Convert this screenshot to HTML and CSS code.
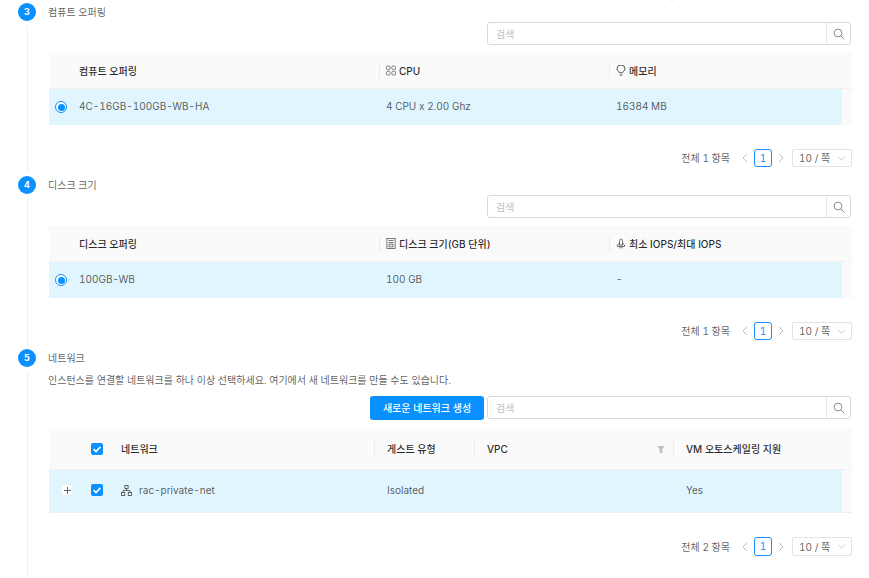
FILE: index.html
```html
<!DOCTYPE html>
<html lang="ko">
<head>
<meta charset="utf-8">
<title>인스턴스</title>
<link rel="stylesheet" href="styles.css">
</head>
<body>
<svg class="defs" width="0" height="0" aria-hidden="true">
  <symbol id="search" viewBox="0 0 12 12"><circle cx="5" cy="5" r="3.9" fill="none" stroke="currentColor"/><path d="M8 8l3.4 3.4" stroke="currentColor" fill="none"/></symbol>
  <symbol id="left" viewBox="0 0 8 10"><path d="M6 1L2 5l4 4" fill="none" stroke="currentColor"/></symbol>
  <symbol id="right" viewBox="0 0 8 10"><path d="M2 1l4 4-4 4" fill="none" stroke="currentColor"/></symbol>
  <symbol id="down" viewBox="0 0 10 6"><path d="M.8.8L5 5 9.2.8" fill="none" stroke="currentColor"/></symbol>
  <symbol id="check" viewBox="0 0 12 12"><path d="M2.6 6.2l2.4 2.3 4.4-4.6" fill="none" stroke="#fff" stroke-width="1.7"/></symbol>
</svg>
<main class="page">
  <span class="top-mark"></span>

  <section class="step">
    <div class="rail"><span class="dot">3</span><span class="line"></span></div>
    <div class="body">
      <div class="title">컴퓨트 오퍼링</div>
      <div class="toolbar">
        <div class="search"><span class="ph">검색</span><span class="search-btn"><svg class="i12"><use href="#search"/></svg></span></div>
      </div>
      <div class="table">
        <div class="row head cols-a">
          <div class="cell first">컴퓨트 오퍼링</div>
          <div class="cell sep"><svg class="i10" viewBox="0 0 10 10"><g fill="none" stroke="#777" stroke-width=".9"><rect x=".5" y=".5" width="3.6" height="3.6" rx=".8"/><rect x="5.9" y=".5" width="3.6" height="3.6" rx=".8"/><rect x=".5" y="5.9" width="3.6" height="3.6" rx=".8"/><rect x="5.9" y="5.9" width="3.6" height="3.6" rx=".8"/></g></svg>CPU</div>
          <div class="cell sep span2"><svg class="i10" viewBox="0 0 10 11"><path d="M3.4 7.8C3.2 6.4 1 5.7 1 3.9a4 4 0 0 1 8 0c0 1.8-2.2 2.5-2.4 3.9zM3.6 10h2.8" fill="none" stroke="#444" stroke-width=".9"/></svg>메모리</div>
        </div>
        <div class="row data cols-a">
          <div class="cell first"><span class="radio"></span>4C-16GB-100GB-WB-HA</div>
          <div class="cell">4 CPU x 2.00 Ghz</div>
          <div class="cell">16384 MB</div>
          <div class="scroll"></div>
        </div>
      </div>
      <div class="pager">
        <span class="total">전체 1 항목</span>
        <svg class="arrow"><use href="#left"/></svg><span class="page-no">1</span><svg class="arrow"><use href="#right"/></svg>
        <span class="size">10 / 쪽<svg class="chev"><use href="#down"/></svg></span>
      </div>
    </div>
  </section>

  <section class="step">
    <div class="rail"><span class="dot">4</span><span class="line"></span></div>
    <div class="body">
      <div class="title">디스크 크기</div>
      <div class="toolbar">
        <div class="search"><span class="ph">검색</span><span class="search-btn"><svg class="i12"><use href="#search"/></svg></span></div>
      </div>
      <div class="table">
        <div class="row head cols-a">
          <div class="cell first">디스크 오퍼링</div>
          <div class="cell sep"><svg class="i10" viewBox="0 0 10 11"><g fill="none" stroke="#555" stroke-width=".8"><rect x=".9" y=".5" width="8.2" height="10"/><path d="M2.6 2.5h4.8M2.6 4.5h4.8M3 6.2h4v2.6H3z"/></g></svg>디스크 크기(GB 단위)</div>
          <div class="cell sep span2"><svg class="i10" viewBox="0 0 10 11"><g fill="none" stroke="#555" stroke-width=".9"><path d="M3.5 7V3.4C3.5 2.2 4.3 1 5 .6c.7.4 1.5 1.6 1.5 2.8V7zM3.5 5L1.4 7v1.4h7.2V7L6.5 5M4 8.6v1.8M6 8.6v1.8"/></g></svg>최소 IOPS/최대 IOPS</div>
        </div>
        <div class="row data cols-a">
          <div class="cell first"><span class="radio"></span>100GB-WB</div>
          <div class="cell">100 GB</div>
          <div class="cell">-</div>
          <div class="scroll"></div>
        </div>
      </div>
      <div class="pager">
        <span class="total">전체 1 항목</span>
        <svg class="arrow"><use href="#left"/></svg><span class="page-no">1</span><svg class="arrow"><use href="#right"/></svg>
        <span class="size">10 / 쪽<svg class="chev"><use href="#down"/></svg></span>
      </div>
    </div>
  </section>

  <section class="step last">
    <div class="rail"><span class="dot">5</span><span class="line"></span></div>
    <div class="body">
      <div class="title">네트워크</div>
      <p class="desc">인스턴스를 연결할 네트워크를 하나 이상 선택하세요. 여기에서 새 네트워크를 만들 수도 있습니다.</p>
      <div class="toolbar tall">
        <button class="btn" type="button">새로운 네트워크 생성</button>
        <div class="search"><span class="ph">검색</span><span class="search-btn"><svg class="i12"><use href="#search"/></svg></span></div>
      </div>
      <div class="table net">
        <div class="row head cols-b">
          <div class="cell net-first"><span class="expand-slot"></span><span class="check"><svg class="i12"><use href="#check"/></svg></span>네트워크</div>
          <div class="cell sep pad12">게스트 유형</div>
          <div class="cell sep pad12 between">VPC<svg class="funnel" viewBox="0 0 9 8"><path d="M0 0h9L6 3.4V8H3V3.4z" fill="#bfbfbf"/></svg></div>
          <div class="cell sep pad12 span2">VM 오토스케일링 지원</div>
        </div>
        <div class="row data cols-b">
          <div class="cell net-first"><span class="expand-slot"><span class="expand"></span></span><span class="check"><svg class="i12"><use href="#check"/></svg></span><svg class="i11" viewBox="0 0 11 11"><g fill="none" stroke="#555" stroke-width=".9"><rect x="3.9" y=".5" width="3.2" height="3"/><rect x=".5" y="7.5" width="3.2" height="3"/><rect x="7.3" y="7.5" width="3.2" height="3"/><path d="M5.5 3.5v2M2.1 7.5v-2h6.8v2"/></g></svg>rac-private-net</div>
          <div class="cell pad12">Isolated</div>
          <div class="cell pad12"></div>
          <div class="cell pad12">Yes</div>
          <div class="scroll"></div>
        </div>
      </div>
      <div class="pager">
        <span class="total">전체 2 항목</span>
        <svg class="arrow"><use href="#left"/></svg><span class="page-no">1</span><svg class="arrow"><use href="#right"/></svg>
        <span class="size">10 / 쪽<svg class="chev"><use href="#down"/></svg></span>
      </div>
    </div>
  </section>

</main>
</body>
</html>
```

FILE: styles.css
```css
* { box-sizing: border-box; }
html, body { margin: 0; height: 100%; overflow: hidden; background: #fff; }
body {
  font-family: Inter, "Noto Sans CJK KR", "Liberation Sans", sans-serif;
  font-size: 10px;
  line-height: 16px;
  font-variant-numeric: tabular-nums;
  font-feature-settings: "tnum";
  color: rgba(0, 0, 0, .65);
}
.defs { position: absolute; }
.page { padding: 3px 17px 0 18px; height: 100%; display: flex; flex-direction: column; position: relative; }
.top-mark { position: absolute; left: 671px; top: 0; width: 2px; height: 1px; background: #e4e4e4; }

.step { display: flex; gap: 12px; height: 173px; flex: none; }
.step.last { flex: 1; height: auto; }

.rail { width: 18px; flex: none; display: flex; flex-direction: column; align-items: center; }
.dot {
  width: 18px; height: 18px; border-radius: 50%;
  background: #0a90ff; color: #fff;
  font-size: 9px; font-weight: 700; line-height: 18px; text-align: center;
  flex: none;
}
.line { width: 1px; flex: 1; background: #f0f0f0; margin-top: 5px; margin-bottom: 3px; }

.body { flex: 1; min-width: 0; }
.title { height: 18px; line-height: 18px; color: rgba(0, 0, 0, .65); }
.desc { margin: 5px 0 0; height: 16px; line-height: 16px; }

.toolbar { margin-top: 1px; display: flex; justify-content: flex-end; align-items: flex-start; gap: 3px; padding-right: 1px; }
.toolbar.tall { margin-top: 8px; }

.search {
  width: 364px; height: 23px; flex: none;
  border: 1px solid #d9d9d9; border-radius: 3px; background: #fff;
  display: flex; align-items: center; justify-content: space-between;
}
.ph { padding-left: 8px; color: #bfbfbf; }
.search-btn {
  width: 24px; height: 21px; border-left: 1px solid #e8e8e8;
  display: flex; align-items: center; justify-content: center; color: #8c8c8c;
}
.i12 { width: 12px; height: 12px; display: block; }
.i10 { width: 10px; height: 11px; margin-right: 3px; flex: none; }
.i11 { width: 11px; height: 11px; margin-right: 7px; flex: none; }

.btn {
  width: 114px; height: 24px; border: 0; border-radius: 3px;
  background: #0a90ff; color: #fff; font: inherit; font-weight: 500; padding: 0;
}

.table { margin: 8px 0 0 1px; }
.table.net { margin-top: 9px; }
.row { display: grid; }
.cols-a { grid-template-columns: 330px 230px 232px 11px; }
.cols-b { grid-template-columns: 325px 100px 199px 168px 11px; }
.head { height: 36px; background: #fafafa; border-bottom: 1px solid #f5f0ee; color: rgba(0, 0, 0, .85); font-weight: 500; }
.data { height: 36px; background: #e1f5fe; }
.data .cell { padding-bottom: 2px; }
.net .head { height: 41px; border-bottom-color: #f0f0f0; }
.net .data { height: 43px; border-bottom: 1px solid #e5f1f6; }

.cell { display: flex; align-items: center; padding-left: 7px; position: relative; min-width: 0; }
.cell.first { padding-left: 30px; }
.cell.pad12 { padding-left: 13px; }
.cell.net-first { padding-left: 13px; }
.span2 { grid-column: span 2; }
.between { justify-content: space-between; padding-right: 8px; }
.sep::before {
  content: ""; position: absolute; left: 0; top: 50%;
  width: 1px; height: 17px; margin-top: -9px; background: #ececec;
}
.scroll { background: #fafafa; border-left: 1px solid #f0f0f0; }

.radio {
  position: absolute; left: 6px; top: 50%; margin-top: -6px;
  width: 12px; height: 12px; border-radius: 50%;
  border: 1px solid #0a90ff; background: #fff;
  display: flex; align-items: center; justify-content: center;
}
.radio::after { content: ""; width: 7px; height: 7px; border-radius: 50%; background: #0a90ff; }

.expand-slot { width: 29px; flex: none; display: flex; align-items: center; }
.expand {
  width: 10px; height: 10px; background: #fff; border-radius: 2px; position: relative;
}
.expand::before { content: ""; position: absolute; left: 1.5px; top: 4.5px; width: 7px; height: 1px; background: #666; }
.expand::after { content: ""; position: absolute; left: 4.5px; top: 1.5px; width: 1px; height: 7px; background: #666; }
.check {
  width: 12px; height: 12px; border-radius: 2px; background: #0a90ff;
  margin-right: 18px; flex: none;
}
.funnel { width: 8px; height: 7px; }

.pager { margin-top: 24px; height: 18px; display: flex; justify-content: flex-end; align-items: center; }
.total { margin-right: 11px; }
.arrow { width: 8px; height: 10px; color: #bfbfbf; flex: none; }
.page-no {
  width: 18px; height: 18px; margin: 0 5px 0 5px;
  border: 1px solid #1890ff; border-radius: 3px; color: #1890ff;
  text-align: center; line-height: 16px; background: #fff;
}
.size {
  width: 60px; height: 18px; margin-left: 7px;
  border: 1px solid #e3e3e3; border-radius: 2px;
  display: flex; align-items: center; justify-content: space-between; padding: 0 5px 0 6px;
  line-height: 16px;
}
.chev { width: 9px; height: 5px; color: #bfbfbf; }
.last .pager { margin-top: 24px; height: 19px; }
.last .page-no { height: 19px; line-height: 17px; }
.last .size { height: 19px; }
```
